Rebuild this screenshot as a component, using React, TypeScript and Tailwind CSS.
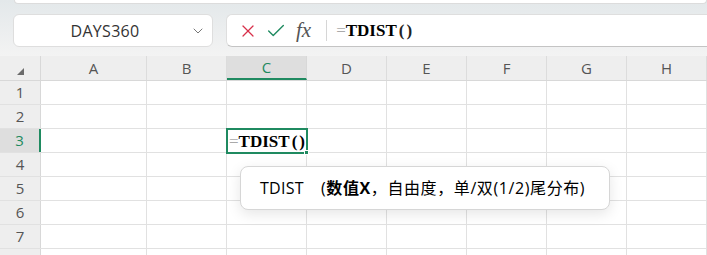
import React from 'react';
import { ChevronDown, X, Check } from 'lucide-react';

const COLS = [
  { key: 'A', w: 'w-[106px]' },
  { key: 'B', w: 'w-[80px]' },
  { key: 'C', w: 'w-[80px]' },
  { key: 'D', w: 'w-[80px]' },
  { key: 'E', w: 'w-[80px]' },
  { key: 'F', w: 'w-[80px]' },
  { key: 'G', w: 'w-[80px]' },
  { key: 'H', w: 'w-[80px]' },
  { key: 'I', w: 'w-[80px]' },
];

const ROWS = [1, 2, 3, 4, 5, 6, 7, 8];

const App: React.FC = () => {
  return (
    <div
      className="relative w-[707px] h-[255px] overflow-hidden bg-[#f3f3f3] text-[#444]"
      style={{ fontFamily: '"Open Sans", "Noto Sans", "Noto Sans CJK SC", sans-serif' }}
    >
      {/* Toolbar */}
      <div className="h-[56px] bg-gradient-to-b from-[#e3e8ea] to-[#f3f3f3]">
        <div className="ml-[14px] h-[4px] bg-white rounded-b-lg border border-t-0 border-[#dcdcdc]" />
        <div className="flex mt-[10px] h-[33px]">
          {/* Name box */}
          <div className="ml-[13px] w-[200px] flex items-center bg-white rounded-md border border-[#dedede]">
            <span className="flex-1 text-center text-[16px] text-[#333] tracking-[0.3px] pl-[6px]">DAYS360</span>
            <ChevronDown size={16} strokeWidth={1.5} className="text-[#777] mr-[6px]" />
          </div>
          {/* Formula bar */}
          <div className="ml-[13px] flex-1 flex items-center bg-white rounded-l-md border border-r-0 border-[#dedede] border-b-[#c4c4c4]">
            <X size={20} strokeWidth={1.45} className="ml-[11px] text-[#d8304a]" />
            <Check size={22} strokeWidth={1.5} className="ml-[7px] text-[#1f8a60]" />
            <span
              className="ml-[9px] text-[21px] italic text-[#555] leading-none"
              style={{ fontFamily: '"Liberation Serif", serif' }}
            >
              fx
            </span>
            <div className="ml-[15px] w-px h-[21px] bg-[#d6d6d6]" />
            <span
              className="ml-[9px] text-[17px] leading-none text-black"
              style={{ fontFamily: '"Liberation Serif", serif' }}
            >
              <span className="text-[#aaa] font-normal">=</span>
              <span className="font-bold">TDIST</span>
              <span className="font-bold ml-[2px] text-[#222] tracking-[2px]">()</span>
            </span>
          </div>
        </div>
      </div>

      {/* Grid */}
      <div className="bg-white">
        {/* Column header */}
        <div className="flex h-[25px] bg-[#eeeeee] border-b border-[#d8d8d8]">
          <div className="w-[41px] shrink-0 border-r border-[#d8d8d8] flex items-end justify-center pb-[5px]">
            <div className="w-0 h-0 border-l-[7px] border-l-transparent border-b-[7px] border-b-[#6b6b6b]" />
          </div>
          {COLS.map((c) => (
            <div
              key={c.key}
              className={
                c.key === 'C'
                  ? `${c.w} shrink-0 border-r border-[#d8d8d8] bg-[#dedede] border-b-2 border-b-[#1f8a60] text-[#1f8a60] text-[15px] flex items-center justify-center`
                  : `${c.w} shrink-0 border-r border-[#dcdcdc] text-[15px] text-[#555] flex items-center justify-center`
              }
            >
              {c.key}
            </div>
          ))}
        </div>

        {ROWS.map((r) => (
          <div key={r} className="flex h-[24px] border-b border-[#e1e1e1]">
            <div
              className={
                r === 3
                  ? 'w-[41px] shrink-0 bg-[#dedede] border-r-2 border-[#1f8a60] text-[#1f8a60] text-[15px] flex items-center justify-center'
                  : 'w-[41px] shrink-0 bg-[#eeeeee] border-r border-[#d8d8d8] text-[15px] text-[#555] flex items-center justify-center'
              }
            >
              {r}
            </div>
            {COLS.map((c) => (
              <div key={c.key} className={`${c.w} shrink-0 border-r border-[#e1e1e1] relative`}>
                {r === 3 && c.key === 'C' && (
                  <div className="absolute -left-[1px] -top-[1px] w-[82px] h-[26px] border-2 border-[#1f8a60] z-10 flex items-center pl-[1px]">
                    <span
                      className="text-[17px] leading-none text-black"
                      style={{ fontFamily: '"Liberation Serif", serif' }}
                    >
                      <span className="text-[#aaa]">=</span>
                      <span className="font-bold">TDIST</span>
                      <span className="font-bold ml-[2px] tracking-[2px]">()</span>
                    </span>
                    <div className="absolute -right-[3px] -bottom-[3px] w-[5px] h-[5px] bg-[#1f8a60] border border-white" />
                  </div>
                )}
              </div>
            ))}
          </div>
        ))}
      </div>

      {/* Function hint tooltip */}
      <div
        className="absolute left-[240px] top-[166px] w-[370px] h-[44px] bg-white rounded-lg border border-[#d6d6d6] shadow-[0_4px_14px_rgba(0,0,0,0.10)] flex items-center pl-[19px] text-[16px] text-black z-20"
        style={{ fontFamily: '"Open Sans", "Noto Sans CJK SC", sans-serif' }}
      >
        <span className="tracking-[0.3px]">TDIST</span>
        <span className="ml-[17px] tracking-[0.6px]">
          (<span className="font-bold">数值X</span>，自由度，单/双(1/2)尾分布)
        </span>
      </div>
    </div>
  );
};

export default App;
